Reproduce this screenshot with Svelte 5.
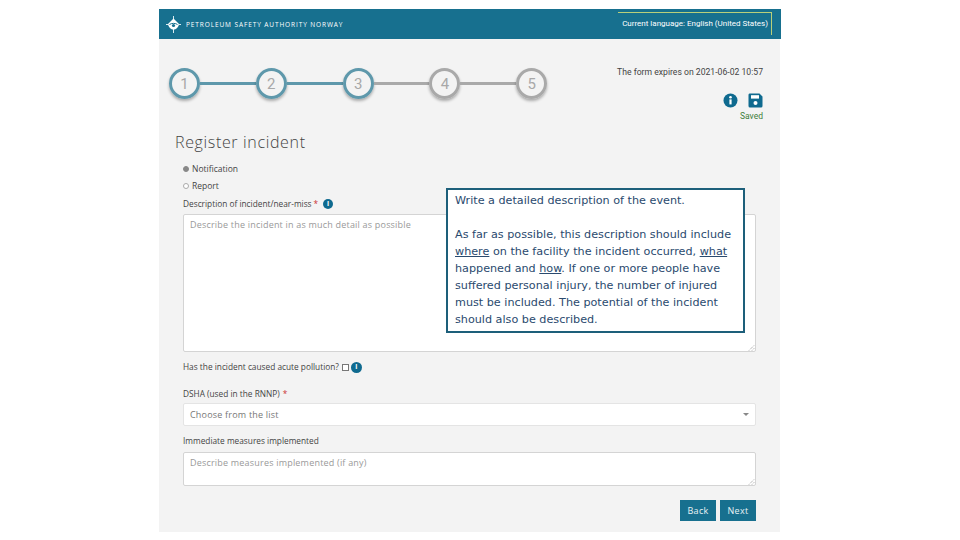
<script>
  const steps = [1, 2, 3, 4, 5];
  const done = 3;
</script>

<div class="page">
  <header class="topbar">
    <div class="brand">
      <svg class="logo" width="17" height="17" viewBox="0 0 17 17">
        <path d="M8.5 0v4M8.5 13v4M1 8.5h2M14 8.5h2" stroke="#d9ebf0" stroke-width="1" />
        <path d="M3 8 8.5 2.5 14 8C13.5 11.5 11 13.5 8.5 13.5S3.5 11.5 3 8Z" fill="#fff" />
        <path d="M4.5 8.5C6.5 7 10.5 7 12.5 8.5" stroke="#17708f" stroke-width="1" fill="none" />
        <circle cx="8.5" cy="9.5" r="1.6" fill="#17708f" />
      </svg>
      <span>PETROLEUM SAFETY AUTHORITY NORWAY</span>
    </div>
    <div class="language">Current language: English (United States)</div>
  </header>

  <section class="progress-row">
    <ol class="stepper">
      {#each steps as step, i}
        {#if i > 0}
          <li class="line" class:active={i < done}></li>
        {/if}
        <li class="circle" class:active={i < done}>{step}</li>
      {/each}
    </ol>
    <div class="status">
      <p class="expires">The form expires on 2021-06-02 10:57</p>
      <div class="actions">
        <svg width="15" height="15" viewBox="0 0 15 15">
          <circle cx="7.5" cy="7.5" r="7" fill="#0f6a8f" />
          <rect x="6.4" y="6.4" width="2.2" height="5" fill="#fff" />
          <circle cx="7.5" cy="4.2" r="1.3" fill="#fff" />
        </svg>
        <svg width="15" height="15" viewBox="0 0 15 15">
          <path d="M1.5 0.5H11.5L14.5 3.5V13a1.5 1.5 0 0 1-1.5 1.5H2A1.5 1.5 0 0 1 .5 13V2A1.5 1.5 0 0 1 1.5 .5Z" fill="#0f6a8f" />
          <rect x="3" y="2.2" width="8" height="3.4" fill="#fff" />
          <circle cx="7.5" cy="10" r="2" fill="#fff" />
        </svg>
      </div>
      <p class="saved">Saved</p>
    </div>
  </section>

  <h1>Register incident</h1>

  <form class="form">
    <label class="radio"><span class="dot checked"></span>Notification</label>
    <label class="radio second"><span class="dot"></span>Report</label>

    <div class="label first">
      Description of incident/near-miss <span class="req">*</span>
      <span class="info">i</span>
    </div>
    <div class="textarea big">
      Describe the incident in as much detail as possible
      <svg class="grip" width="7" height="7" viewBox="0 0 7 7"><path d="M1 6.5 6.5 1M4 6.5 6.5 4" stroke="#777" stroke-width="0.8" stroke-dasharray="1 1" /></svg>
    </div>

    <div class="label pollution">
      Has the incident caused acute pollution?
      <span class="check"></span>
      <span class="info wide">i</span>
    </div>

    <div class="label dsha">DSHA (used in the RNNP) <span class="req">*</span></div>
    <div class="select">
      Choose from the list
      <span class="caret"></span>
    </div>

    <div class="label measures">Immediate measures implemented</div>
    <div class="textarea small">
      Describe measures implemented (if any)
      <svg class="grip" width="7" height="7" viewBox="0 0 7 7"><path d="M1 6.5 6.5 1M4 6.5 6.5 4" stroke="#777" stroke-width="0.8" stroke-dasharray="1 1" /></svg>
    </div>

    <div class="buttons">
      <button type="button">Back</button>
      <button type="button">Next</button>
    </div>
  </form>

  <div class="tooltip">
    <p>Write a detailed description of the event.</p>
    <p>
      As far as possible, this description should include
      <u>where</u> on the facility the incident occurred, <u>what</u>
      happened and <u>how</u>. If one or more people have suffered personal injury, the number of injured
      must be included. The potential of the incident should also be described.
    </p>
  </div>
</div>

<style>
  :global(body) {
    margin: 0;
    background: #ffffff;
  }

  .page {
    position: relative;
    width: 621px;
    height: 523px;
    margin: 9px 0 0 159px;
    background: #f3f3f3;
    font-family: "Open Sans", sans-serif;
    font-size: 9px;
    color: #444;
  }

  /* Header */

  .topbar {
    display: flex;
    justify-content: space-between;
    align-items: flex-start;
    height: 30px;
    margin-right: -1px;
    background: #17708f;
    color: #ffffff;
  }

  .brand {
    display: flex;
    align-items: center;
    gap: 4px;
    height: 30px;
    padding-left: 6px;
    font-size: 6.5px;
    letter-spacing: 0.9px;
  }

  .language {
    margin: 3px 9px 0 0;
    padding: 5px 3px 6px 4px;
    border-top: 1px solid #b9cf7a;
    border-right: 1px solid #b9cf7a;
    font-family: Roboto, sans-serif;
    font-size: 8px;
    line-height: 11px;
  }

  /* Stepper */

  .progress-row {
    display: flex;
    justify-content: space-between;
    height: 73px;
  }

  .stepper {
    display: flex;
    align-items: center;
    height: 31px;
    margin: 29px 0 0 10px;
    padding: 0;
    list-style: none;
  }

  .circle {
    display: flex;
    justify-content: center;
    align-items: center;
    box-sizing: border-box;
    width: 31px;
    height: 31px;
    border: 3px solid #a9a9a9;
    border-radius: 50%;
    box-shadow: 0 2px 3px rgba(0, 0, 0, 0.3);
    font-family: Roboto, sans-serif;
    font-size: 15px;
    color: #a8a8a8;
  }

  .circle.active {
    border-color: #5e98ab;
  }

  .line {
    width: 55.8px;
    height: 3px;
    background: #a9a9a9;
  }

  .line.active {
    background: #5e98ab;
  }

  .status {
    margin-right: 17px;
    text-align: right;
    font-family: Roboto, sans-serif;
  }

  .expires {
    margin: 28px 0 0;
    font-size: 8.65px;
    line-height: 11px;
  }

  .actions {
    display: flex;
    justify-content: flex-end;
    gap: 10px;
    margin-top: 15px;
    height: 15px;
  }

  .saved {
    margin: 3px 0 0;
    font-size: 8.5px;
    line-height: 11px;
    color: #3e7d3a;
  }

  h1 {
    margin: 20px 0 0 16px;
    font-family: "Open Sans", sans-serif;
    font-size: 16px;
    line-height: 20px;
    font-weight: 300;
    letter-spacing: 0.65px;
    color: #444;
  }

  /* Form */

  .form {
    display: flex;
    flex-direction: column;
    width: 573px;
    margin: 11px 0 0 24px;
  }

  .radio {
    display: flex;
    align-items: center;
    gap: 3px;
    height: 12px;
    line-height: 12px;
    font-size: 8.5px;
  }

  .radio.second {
    margin-top: 5px;
  }

  .dot {
    box-sizing: border-box;
    width: 6px;
    height: 6px;
    border: 1px solid #aaa;
    border-radius: 50%;
    background: #fff;
  }

  .dot.checked {
    border-color: #888;
    background: #888;
  }

  .label {
    display: flex;
    align-items: center;
    gap: 3px;
    height: 12px;
    line-height: 12px;
    font-size: 8.3px;
  }

  .label.first {
    gap: 2px;
    margin-top: 6px;
  }

  .first .req {
    margin-right: 3px;
  }

  .label.pollution {
    margin-top: 9px;
  }

  .label.dsha {
    margin-top: 15px;
  }

  .label.measures {
    margin-top: 9px;
  }

  .req {
    color: #c33;
  }

  .info {
    display: inline-flex;
    justify-content: center;
    align-items: center;
    width: 10px;
    height: 10px;
    border-radius: 50%;
    background: #0f6a8f;
    color: #fff;
    font-size: 7px;
    font-weight: 700;
  }

  .info.wide {
    width: 11px;
    height: 11px;
  }

  .check {
    box-sizing: border-box;
    width: 7px;
    height: 7px;
    margin-right: -1px;
    border: 1px solid #777;
    background: #fff;
  }

  .textarea,
  .select {
    position: relative;
    box-sizing: border-box;
    border: 1px solid #d4d4d4;
    border-radius: 2px;
    background: #ffffff;
    color: #999;
    font-size: 9px;
    letter-spacing: 0.2px;
  }

  .textarea {
    padding: 4px 6px;
    line-height: 12px;
  }

  .textarea.big {
    height: 138px;
    margin-top: 4px;
  }

  .textarea.small {
    height: 34px;
    margin-top: 5px;
  }

  .select {
    display: flex;
    justify-content: space-between;
    align-items: center;
    height: 23px;
    margin-top: 3px;
    padding: 0 6px;
    border-color: #e4e4e4;
    color: #777;
  }

  .caret {
    width: 0;
    height: 0;
    border-left: 3px solid transparent;
    border-right: 3px solid transparent;
    border-top: 3px solid #888;
  }

  .grip {
    position: absolute;
    right: 0;
    bottom: 0;
  }

  .buttons {
    display: flex;
    justify-content: flex-end;
    gap: 4px;
    margin-top: 14px;
  }

  button {
    width: 36px;
    height: 21px;
    padding: 0;
    border: none;
    background: #17708f;
    color: #e8f2f5;
    font-family: "Open Sans", sans-serif;
    font-size: 9px;
    letter-spacing: 0.3px;
  }

  /* Tooltip lying over the description field */

  .tooltip {
    position: absolute;
    left: 287px;
    top: 179px;
    box-sizing: border-box;
    width: 299px;
    height: 145px;
    padding: 2px 7px;
    border: 2px solid #1d5f7a;
    background: #ffffff;
    font-family: "DejaVu Sans", sans-serif;
    font-size: 11.2px;
    line-height: 17px;
    color: #2a4a6e;
  }

  .tooltip p {
    margin: 0 0 17px;
  }

  .tooltip p:last-child {
    margin-bottom: 0;
  }
</style>
